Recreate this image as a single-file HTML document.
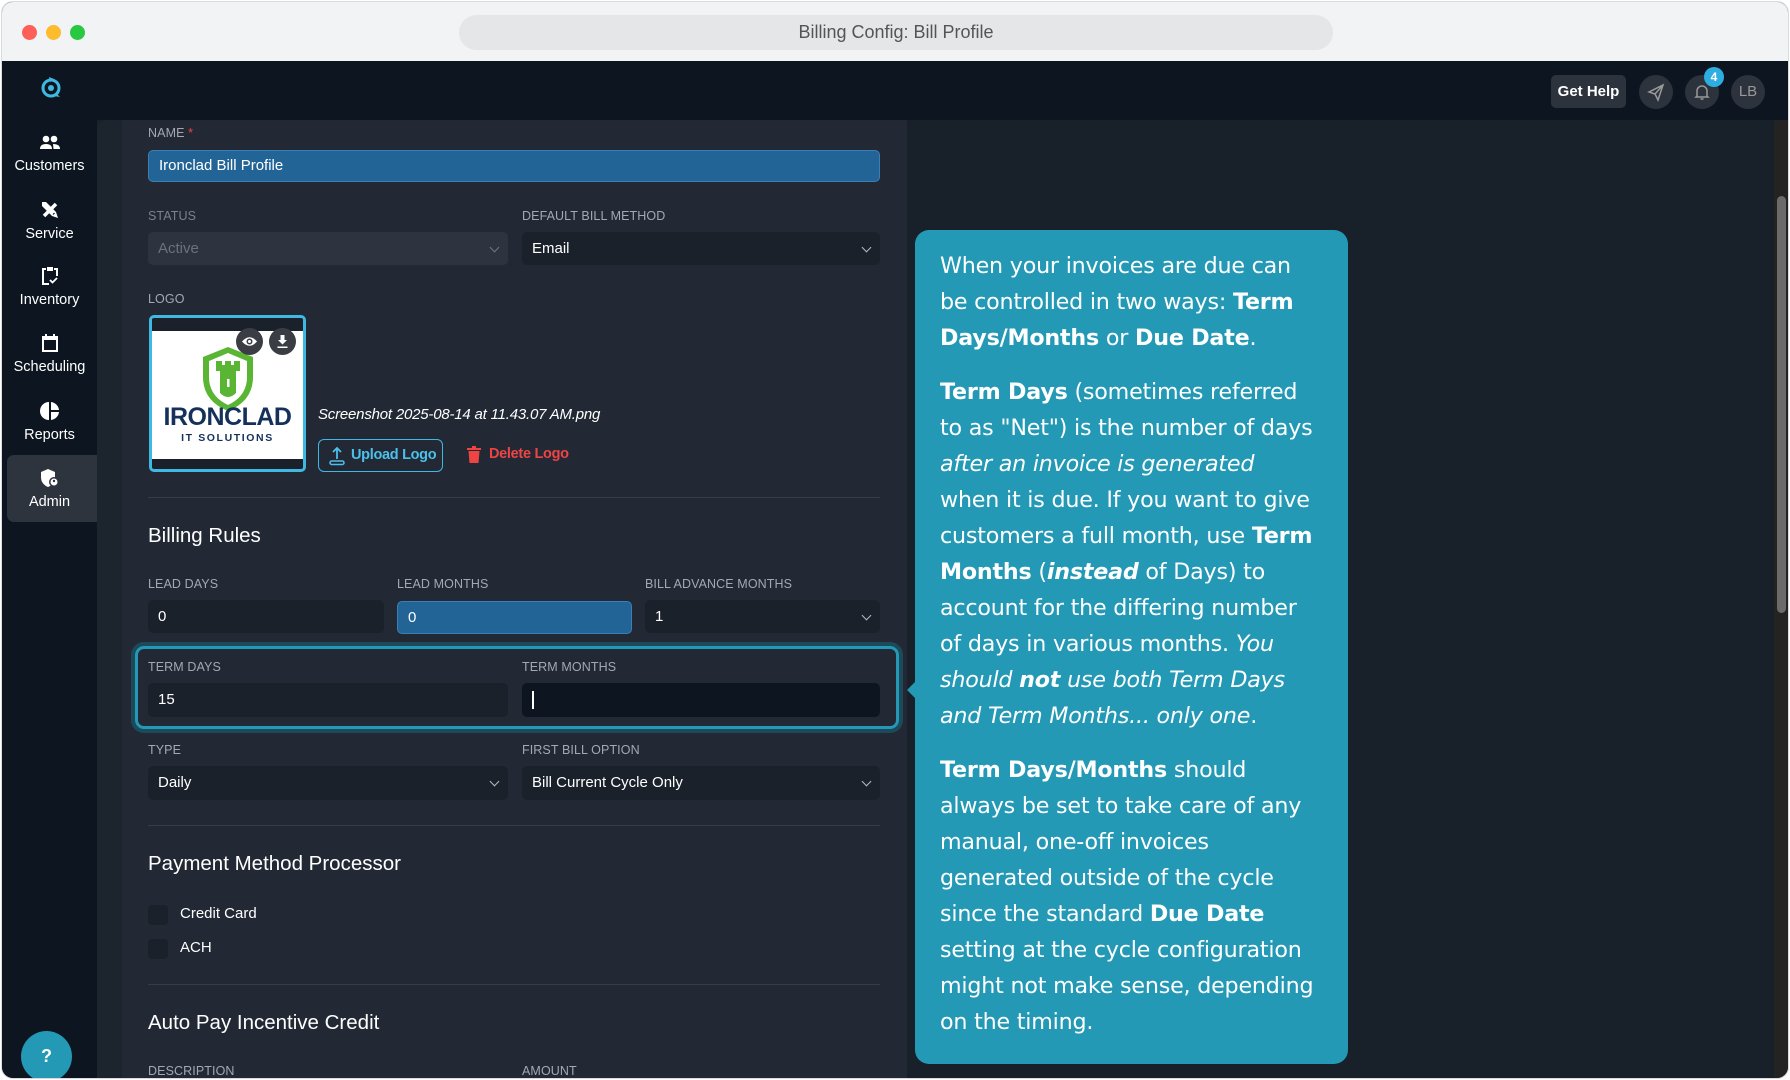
<!DOCTYPE html>
<html><head><meta charset="utf-8"><style>
*{box-sizing:border-box;margin:0;padding:0}
body{width:1790px;height:1080px;overflow:hidden;background:#fff;font-family:"Liberation Sans",sans-serif;position:relative}
.win{position:absolute;left:1px;top:1px;width:1788px;height:1078px;border-radius:12px;overflow:hidden;background:#18202a;border:1px solid #d8dadd}
.titlebar{position:absolute;left:0;top:0;width:100%;height:60px;background:#f2f3f5}
.dot{position:absolute;top:23px;width:15px;height:15px;border-radius:50%}
.url{position:absolute;left:457px;top:13px;width:874px;height:35px;border-radius:18px;background:#e5e6e8;text-align:center;line-height:35px;font-size:18px;color:#555}
.topbar{position:absolute;left:0;top:59px;width:100%;height:59px;background:#0c1520}
.side{position:absolute;left:0;top:118px;width:95px;bottom:0;background:#0c1520}
.nav{position:absolute;left:0;width:95px;text-align:center;color:#fff;font-size:14.5px}
.nav svg{display:block;margin:0 auto 6px}
.strip{position:absolute;left:95px;top:118px;width:30px;bottom:0;background:#1c242e;border-top-left-radius:10px}
.panel{position:absolute;left:120px;top:118px;width:785px;bottom:0;background:#222935}
.lbl{position:absolute;font-size:12.5px;color:#a3a9b2;letter-spacing:.1px}
.in{position:absolute;height:33px;border-radius:5px;background:#1a212b;color:#fff;font-size:15px;line-height:33px;padding-left:10px}
.chev{position:absolute;right:10px;top:12px;width:7px;height:7px;border-right:1.5px solid #bbb;border-bottom:1.5px solid #bbb;transform:rotate(45deg)}
.hr{position:absolute;left:147px;width:732px;height:1px;background:#353d48}
.h{position:absolute;left:147px;font-size:20.5px;color:#fff}
.cb{position:absolute;left:147px;width:20px;height:20px;border-radius:4px;background:#1a212b}
.cbl{position:absolute;left:179px;font-size:15px;color:#fff}
.tip{position:absolute;left:913px;top:228px;width:433px;height:834px;background:#2399b6;border-radius:14px;padding:18px 0 0 25px;color:#fff;font-family:"DejaVu Sans","Liberation Sans",sans-serif;font-size:22.2px;line-height:36px;white-space:nowrap;letter-spacing:-.2px}
.tip p{margin-bottom:18px}
.tip:before{content:"";position:absolute;left:-8px;top:452px;border-top:8px solid transparent;border-bottom:8px solid transparent;border-right:8px solid #2399b6}
.circ{position:absolute;top:74px;width:34px;height:34px;border-radius:50%;background:#2c333d}
</style></head><body><div class="win">
<div class="titlebar">
<div class="dot" style="left:20px;background:#fe5f57"></div>
<div class="dot" style="left:44px;background:#fdbc2e"></div>
<div class="dot" style="left:68px;background:#28c840"></div>
<div class="url">Billing Config: Bill Profile</div>
</div>
<div class="topbar">
<svg style="position:absolute;left:38px;top:13px" width="24" height="26" viewBox="0 0 24 26"><circle cx="11" cy="14" r="8" fill="none" stroke="#3fb8e2" stroke-width="3"/><circle cx="11" cy="14" r="3" fill="#3fb8e2"/><path d="M9 3 L14 5 L10 8Z" fill="#3fb8e2"/><path d="M17 20 L20 23 L14 22Z" fill="#3fb8e2"/></svg>
<div style="position:absolute;left:1549px;top:14px;width:75px;height:33px;border-radius:5px;background:#2c333d;color:#fff;font-weight:bold;font-size:15px;line-height:33px;text-align:center">Get Help</div>
</div>
<div class="circ" style="left:1637px;top:73px"><svg width="34" height="34" viewBox="0 0 34 34"><path d="M10 17 L24 10 L19 25 L16 19Z M16 19 L24 10" fill="none" stroke="#999" stroke-width="1.5"/></svg></div>
<div class="circ" style="left:1683px;top:73px"><svg width="34" height="34" viewBox="0 0 34 34"><path d="M12 21 L12 16 A5 5 0 0 1 22 16 L22 21 L23 22 L11 22Z M15.5 24 L18.5 24" fill="none" stroke="#999" stroke-width="1.5"/></svg></div>
<div style="position:absolute;left:1702px;top:65px;width:20px;height:20px;border-radius:50%;background:#2eaee0;color:#fff;font-size:12px;font-weight:bold;text-align:center;line-height:20px">4</div>
<div class="circ" style="left:1729px;top:73px;color:#999;font-size:15px;text-align:center;line-height:34px">LB</div>
<div class="side">
<div class="nav" style="top:14px"><svg width="22" height="18" viewBox="0 0 22 18"><circle cx="7" cy="5" r="3.3" fill="#fff"/><circle cx="15" cy="5" r="3.3" fill="#fff"/><path d="M1 15 Q1 10 7 10 Q13 10 13 15Z M14 10 Q21 10 21 15 L14.5 15Z" fill="#fff"/></svg>Customers</div>
<div class="nav" style="top:80px"><svg width="20" height="20" viewBox="0 0 20 20"><path d="M4 16 L16 4" stroke="#fff" stroke-width="3.5"/><path d="M2 2 L6 2 L16 12 L18 18 L12 16 L2 6Z" fill="#fff"/><path d="M13 14.5 L14.5 13" stroke="#0c1520" stroke-width="1.2"/></svg>Service</div>
<div class="nav" style="top:146px"><svg width="18" height="20" viewBox="0 0 18 20"><path d="M5 3 L2 3 L2 18 L8 18 M13 3 L16 3 L16 10" fill="none" stroke="#fff" stroke-width="2"/><rect x="6" y="1" width="6" height="4" fill="#fff"/><path d="M9 14 L11.5 16.5 L16 12" fill="none" stroke="#fff" stroke-width="1.8"/></svg>Inventory</div>
<div class="nav" style="top:213px"><svg width="18" height="20" viewBox="0 0 18 20"><rect x="2" y="4" width="14" height="14" fill="none" stroke="#fff" stroke-width="2"/><rect x="2" y="3" width="14" height="4" fill="#fff"/><path d="M5 1V4M13 1V4" stroke="#fff" stroke-width="2"/></svg>Scheduling</div>
<div class="nav" style="top:281px"><svg width="20" height="20" viewBox="0 0 20 20"><path d="M9 1 A9 9 0 0 0 9 19Z M11 1 A9 9 0 0 1 19 9 L11 9Z M11 11 L19 11 A9 9 0 0 1 11 19Z" fill="#fff"/></svg>Reports</div>
<div style="position:absolute;left:5px;top:335px;width:90px;height:67px;border-radius:7px 0 0 7px;background:#2d343e"></div>
<div class="nav" style="top:348px"><svg width="20" height="20" viewBox="0 0 20 20"><path d="M8 1 L15 4 L15 9 Q15 16 8 19 Q1 16 1 9 L1 4Z" fill="#fff"/><circle cx="14" cy="14" r="5" fill="#2d343e"/><circle cx="14" cy="14" r="3.5" fill="#fff"/><circle cx="14" cy="13" r="1.2" fill="#2d343e"/></svg>Admin</div>
<div style="position:absolute;left:19px;top:911px;width:51px;height:51px;border-radius:50%;background:#2399b6;color:#fff;font-weight:bold;font-size:18px;text-align:center;line-height:51px">?</div>
</div>
<div class="strip"></div>
<div class="panel"></div>
<div style="position:absolute;left:-1px;top:-1px;width:1790px;height:1080px">
<div class="lbl" style="left:147px;top:125px">NAME <span style="color:#ef4444">*</span></div>
<div class="in" style="left:147px;top:149px;width:732px;height:32px;line-height:30px;background:#236496;border:1px solid #3a7fb5">Ironclad Bill Profile</div>
<div class="lbl" style="left:147px;top:208px;color:#7b828c">STATUS</div>
<div class="in" style="left:147px;top:231px;width:360px;background:#2d3440;color:#6b727c">Active<div class="chev" style="border-color:#777"></div></div>
<div class="lbl" style="left:521px;top:208px">DEFAULT BILL METHOD</div>
<div class="in" style="left:521px;top:231px;width:358px">Email<div class="chev"></div></div>
<div class="lbl" style="left:147px;top:291px">LOGO</div>
<div style="position:absolute;left:148px;top:314px;width:157px;height:157px;border:3px solid #3fb8e2;border-radius:5px;background:#1a212b;overflow:hidden">
<div style="position:absolute;left:0;top:13px;width:151px;height:128px;background:#fff"></div>
<svg style="position:absolute;left:48px;top:27px" width="56" height="68" viewBox="0 0 56 68"><path d="M28 2 L53 12 L53 32 Q53 56 28 66 Q3 56 3 32 L3 12Z" fill="#5bb534"/><path d="M28 8 L47 16 L47 32 Q47 51 28 60 Q9 51 9 32 L9 16Z" fill="#fff"/><path d="M16 16 H22 V20 H25 V16 H31 V20 H34 V16 H40 V26 H36 V48 Q28 56 20 48 V26 H16Z" fill="#5bb534"/><rect x="27" y="34" width="2.5" height="8" fill="#fff"/></svg>
<div style="position:absolute;left:0;top:85px;width:151px;text-align:center;color:#15305a;font-weight:bold;font-size:25px;letter-spacing:-.5px">IRONCLAD</div>
<div style="position:absolute;left:0;top:114px;width:151px;text-align:center;color:#15305a;font-weight:bold;font-size:10.5px;letter-spacing:1.6px">IT SOLUTIONS</div>
<div style="position:absolute;left:84px;top:10px;width:27px;height:27px;border-radius:50%;background:#3a3e44"><svg width="27" height="27" viewBox="0 0 27 27"><path d="M6 13.5 Q13.5 5 21 13.5 Q13.5 22 6 13.5Z" fill="#fff"/><circle cx="13.5" cy="13.5" r="3" fill="#3a3e44"/><circle cx="13.5" cy="13.5" r="1.5" fill="#fff"/></svg></div>
<div style="position:absolute;left:117px;top:10px;width:27px;height:27px;border-radius:50%;background:#3a3e44"><svg width="27" height="27" viewBox="0 0 27 27"><path d="M11.5 7 H15.5 V12 H18 L13.5 16.5 L9 12 H11.5Z M8.5 18.5 H18.5 V20 H8.5Z" fill="#fff"/></svg></div>
</div>
<div style="position:absolute;left:317px;top:405px;font-size:15px;font-style:italic;color:#fff;letter-spacing:-.2px">Screenshot 2025-08-14 at 11.43.07 AM.png</div>
<div style="position:absolute;left:317px;top:438px;width:125px;height:33px;border:1.5px solid #3fb8e2;border-radius:6px;color:#4cc0ea;font-weight:bold;font-size:14.5px;line-height:30px;padding-left:32px;white-space:nowrap;letter-spacing:-.3px"><svg style="position:absolute;left:9px;top:6px" width="18" height="20" viewBox="0 0 18 20"><path d="M9 2 V13 M5 6 L9 2 L13 6" fill="none" stroke="#4cc0ea" stroke-width="1.8"/><rect x="2" y="15" width="14" height="3.5" rx="1.7" fill="none" stroke="#4cc0ea" stroke-width="1.5"/></svg>Upload Logo</div>
<svg style="position:absolute;left:466px;top:445px" width="14" height="17" viewBox="0 0 14 17"><rect x="0" y="2" width="14" height="2" fill="#ef4444"/><rect x="5" y="0" width="4" height="2" fill="#ef4444"/><path d="M1.5 5 H12.5 L11.5 17 H2.5Z" fill="#ef4444"/></svg>
<div style="position:absolute;left:488px;top:445px;color:#ef4444;font-weight:bold;font-size:14.5px;letter-spacing:-.3px">Delete Logo</div>
<div class="hr" style="top:496px"></div>
<div class="h" style="top:523px">Billing Rules</div>
<div class="lbl" style="left:147px;top:576px">LEAD DAYS</div>
<div class="lbl" style="left:396px;top:576px">LEAD MONTHS</div>
<div class="lbl" style="left:644px;top:576px">BILL ADVANCE MONTHS</div>
<div class="in" style="left:147px;top:599px;width:236px">0</div>
<div class="in" style="left:396px;top:600px;width:235px;background:#236496;border:1px solid #3a7fb5;line-height:31px">0</div>
<div class="in" style="left:644px;top:599px;width:235px">1<div class="chev"></div></div>
<div style="position:absolute;left:134px;top:645px;width:764px;height:83px;border:3px solid #2399b6;border-radius:9px;box-shadow:0 0 0 4px #1d4a5a"></div>
<div class="lbl" style="left:147px;top:659px">TERM DAYS</div>
<div class="lbl" style="left:521px;top:659px">TERM MONTHS</div>
<div class="in" style="left:147px;top:682px;width:360px;height:34px;line-height:34px">15</div>
<div class="in" style="left:521px;top:682px;width:358px;height:34px;background:#0c1520"><div style="position:absolute;left:10px;top:8px;width:1.5px;height:18px;background:#fff"></div></div>
<div class="lbl" style="left:147px;top:742px">TYPE</div>
<div class="lbl" style="left:521px;top:742px">FIRST BILL OPTION</div>
<div class="in" style="left:147px;top:765px;width:360px;height:34px;line-height:34px">Daily<div class="chev"></div></div>
<div class="in" style="left:521px;top:765px;width:358px;height:34px;line-height:34px">Bill Current Cycle Only<div class="chev"></div></div>
<div class="hr" style="top:824px"></div>
<div class="h" style="top:851px">Payment Method Processor</div>
<div class="cb" style="top:904px"></div><div class="cbl" style="top:904px">Credit Card</div>
<div class="cb" style="top:938px"></div><div class="cbl" style="top:938px">ACH</div>
<div class="hr" style="top:983px"></div>
<div class="h" style="top:1010px">Auto Pay Incentive Credit</div>
<div class="lbl" style="left:147px;top:1063px">DESCRIPTION</div>
<div class="lbl" style="left:521px;top:1063px">AMOUNT</div>
</div>
<div class="tip">
<p>When your invoices are due can<br>be controlled in two ways: <b>Term</b><br><b>Days/Months</b> or <b>Due Date</b>.</p>
<p><b>Term Days</b> (sometimes referred<br>to as "Net") is the number of days<br><i>after an invoice is generated</i><br>when it is due. If you want to give<br>customers a full month, use <b>Term</b><br><b>Months</b> (<b><i>instead</i></b> of Days) to<br>account for the differing number<br>of days in various months. <i>You</i><br><i>should <b>not</b> use both Term Days</i><br><i>and Term Months... only one</i>.</p>
<p><b>Term Days/Months</b> should<br>always be set to take care of any<br>manual, one-off invoices<br>generated outside of the cycle<br>since the standard <b>Due Date</b><br>setting at the cycle configuration<br>might not make sense, depending<br>on the timing.</p>
</div>
<div style="position:absolute;left:1772px;top:118px;width:16px;bottom:0;background:#232323"></div>
<div style="position:absolute;left:1775px;top:194px;width:9px;height:417px;border-radius:5px;background:#6b6b6b"></div>
</div>
</body></html>
